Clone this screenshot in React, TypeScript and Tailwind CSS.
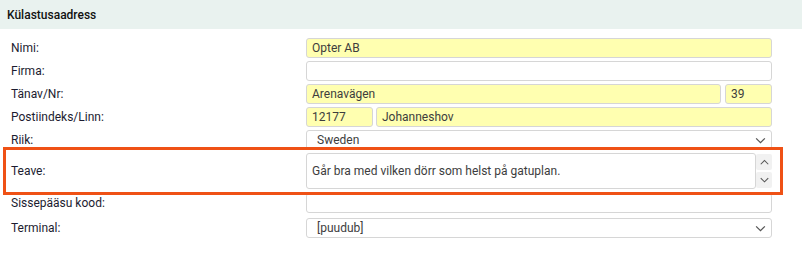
import type { ReactNode } from "react";

const font = { fontFamily: "Roboto, 'Noto Sans', sans-serif" };

const Chevron = ({ up = false, className = "" }: { up?: boolean; className?: string }) => (
  <svg viewBox="0 0 12 8" className={className} fill="none" stroke="currentColor" strokeWidth="1.4">
    <path d={up ? "M1 7 L6 2 L11 7" : "M1 1.5 L6 6.5 L11 1.5"} />
  </svg>
);

const Field = ({ value = "", yellow = false, className = "" }: { value?: string; yellow?: boolean; className?: string }) => (
  <div
    className={`h-5 rounded-[3px] border border-[#d6d6d6] px-[5px] flex items-center text-[12px] text-[#3d3d3d] ${
      yellow ? "bg-[#ffffb0]" : "bg-white"
    } ${className}`}
  >
    {value}
  </div>
);

const Select = ({ value }: { value: string }) => (
  <div className="h-5 rounded-[3px] border border-[#d6d6d6] bg-white pl-[10px] pr-[5px] flex items-center justify-between text-[12px] text-[#3d3d3d]">
    <span>{value}</span>
    <Chevron className="w-[11px] h-[7px] text-[#555]" />
  </div>
);

const Row = ({ label, children, className = "" }: { label: string; children: ReactNode; className?: string }) => (
  <div className={`flex items-center ${className}`}>
    <div className="w-[306px] shrink-0 pl-[11px] text-[12px] text-[#1c1c30]">{label}</div>
    <div className="flex-1">{children}</div>
  </div>
);

export default function App() {
  return (
    <div className="w-[802px] h-[256px] bg-white" style={font}>
      <div className="h-[29px] bg-[#e9f2ef] px-[7px] flex items-center text-[12px] font-medium text-[#111]">
        Külastusaadress
      </div>

      <div className="pt-[9px] pr-[30px] flex flex-col">
        <Row label="Nimi:">
          <Field value="Opter AB" yellow />
        </Row>
        <Row label="Firma:" className="mt-[3px]">
          <Field />
        </Row>
        <Row label="Tänav/Nr:" className="mt-[3px]">
          <div className="flex gap-[4px]">
            <Field value="Arenavägen" yellow className="flex-1" />
            <Field value="39" yellow className="w-[47px]" />
          </div>
        </Row>
        <Row label="Postiindeks/Linn:" className="mt-[3px]">
          <div className="flex gap-[3px]">
            <Field value="12177" yellow className="w-[67px]" />
            <Field value="Johanneshov" yellow className="flex-1" />
          </div>
        </Row>
        <Row label="Riik:" className="mt-[3px]">
          <Select value="Sweden" />
        </Row>

        <div className="relative mt-[3px]">
          <Row label="Teave:">
            <div className="flex h-[36px]">
              <div className="flex-1 rounded-[3px] border border-[#d6d6d6] bg-white px-[5px] flex items-center text-[12px] text-[#3d3d3d]">
                Går bra med vilken dörr som helst på gatuplan.
              </div>
              <div className="w-[16px] flex flex-col justify-between py-[1px]">
                <div className="h-[16px] rounded-[2px] bg-[#f1f1f1] flex items-center justify-center">
                  <Chevron up className="w-[9px] h-[6px] text-[#555]" />
                </div>
                <div className="h-[16px] rounded-[2px] bg-[#f1f1f1] flex items-center justify-center">
                  <Chevron className="w-[9px] h-[6px] text-[#555]" />
                </div>
              </div>
            </div>
          </Row>
          <div className="absolute left-[3px] right-[-11px] top-[-6px] bottom-[-6px] border-[3px] border-[#ef5115] pointer-events-none" />
        </div>

        <Row label="Sissepääsu kood:" className="mt-[4px]">
          <Field />
        </Row>
        <Row label="Terminal:" className="mt-[5px]">
          <Select value="[puudub]" />
        </Row>
      </div>
    </div>
  );
}
